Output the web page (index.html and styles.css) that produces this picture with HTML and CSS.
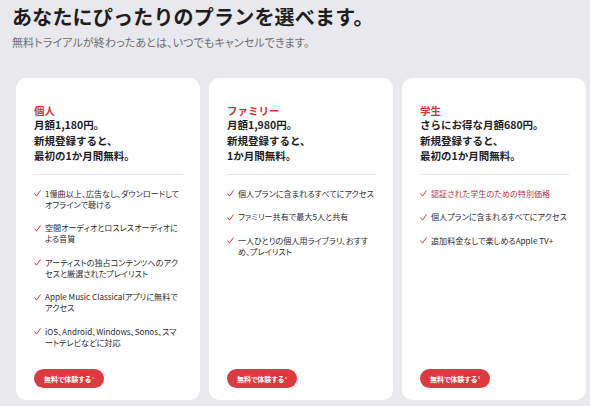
FILE: index.html
```html
<!DOCTYPE html>
<html lang="ja">
<head>
<meta charset="utf-8">
<title>プランを選ぶ</title>
<link rel="stylesheet" href="styles.css">
</head>
<body>
<header class="intro">
  <h1 class="intro-title">あなたにぴったりのプランを選べます。</h1>
  <p class="intro-sub">無料トライアルが終わったあとは、いつでもキャンセルできます。</p>
</header>

<main class="plans">
  <section class="plan">
    <h2 class="plan-name">個人</h2>
    <p class="plan-price">月額1,180円。<br>新規登録すると、<br>最初の1か月間無料。</p>
    <ul class="features">
      <li>1億曲以上、広告なし、ダウンロードしてオフラインで聴ける</li>
      <li>空間オーディオとロスレスオーディオによる音質</li>
      <li>アーティストの独占コンテンツへのアクセスと厳選されたプレイリスト</li>
      <li>Apple Music Classicalアプリに無料でアクセス</li>
      <li>iOS、Android、Windows、Sonos、スマートテレビなどに対応</li>
    </ul>
    <a class="cta" href="#">無料で体験する<sup>¹</sup></a>
  </section>

  <section class="plan">
    <h2 class="plan-name">ファミリー</h2>
    <p class="plan-price">月額1,980円。<br>新規登録すると、<br>1か月間無料。</p>
    <ul class="features">
      <li>個人プランに含まれるすべてにアクセス</li>
      <li>ファミリー共有で最大5人と共有</li>
      <li>一人ひとりの個人用ライブラリ、おすすめ、プレイリスト</li>
    </ul>
    <a class="cta" href="#">無料で体験する<sup>²</sup></a>
  </section>

  <section class="plan">
    <h2 class="plan-name">学生</h2>
    <p class="plan-price">さらにお得な月額680円。<br>新規登録すると、<br>最初の1か月間無料。</p>
    <ul class="features">
      <li class="is-highlight">認証された学生のための特別価格</li>
      <li>個人プランに含まれるすべてにアクセス</li>
      <li>追加料金なしで楽しめるApple TV+</li>
    </ul>
    <a class="cta" href="#">無料で体験する<sup>³</sup></a>
  </section>
</main>
</body>
</html>
```

FILE: styles.css
```css
* {
  box-sizing: border-box;
}

html, body {
  margin: 0;
  padding: 0;
}

body {
  width: 590px;
  height: 406px;
  overflow: hidden;
  background: #e8e8ed;
  color: #1d1d1f;
  font-family: "Noto Sans CJK JP", "Noto Sans", sans-serif;
}

/* heading block */
.intro {
  padding: 3px 12px 0;
}

.intro-title {
  margin: 0;
  font-size: 20px;
  line-height: 28px;
  font-weight: 700;
  letter-spacing: 0.2px;
}

.intro-sub {
  margin: 4px 0 0;
  font-size: 11px;
  line-height: 14px;
  color: #6e6e73;
  font-feature-settings: "palt";
  letter-spacing: 0.1px;
}

/* plan cards */
.plans {
  display: flex;
  gap: 9px;
  padding: 29px 0 0 16px;
}

.plan {
  flex: 0 0 184px;
  height: 322px;
  display: flex;
  flex-direction: column;
  padding: 27px 17px 12px 18px;
  background: #fff;
  border-radius: 10px;
}

.plan-name {
  margin: 0;
  font-size: 10.5px;
  line-height: 12px;
  font-weight: 700;
  color: #d7313b;
}

.plan-price {
  margin: 0;
  font-size: 10.5px;
  line-height: 15.5px;
  font-weight: 700;
  padding-bottom: 10px;
  border-bottom: 1px solid #e6e6eb;
}

.features {
  list-style: none;
  margin: 0;
  padding: 13px 0 0;
  display: flex;
  flex-direction: column;
  gap: 12.5px;
}

.features li {
  display: flex;
  gap: 4px;
  font-size: 8.1px;
  line-height: 11px;
  color: #2c2c2e;
  font-feature-settings: "palt";
}

.features li::before {
  content: "";
  flex: 0 0 7px;
  height: 7px;
  margin-top: 2.5px;
  background: url("data:image/svg+xml;utf8,<svg xmlns='http://www.w3.org/2000/svg' viewBox='0 0 7 7'><path d='M0.7 3.9 L2.5 6.1 L6.3 0.8' fill='none' stroke='%23d7313b' stroke-width='1' stroke-linecap='round' stroke-linejoin='round'/></svg>") no-repeat center / contain;
}

.features li.is-highlight {
  color: #b8344a;
}

.cta {
  margin-top: auto;
  align-self: flex-start;
  display: inline-flex;
  align-items: center;
  height: 19px;
  padding: 0 10px;
  border-radius: 10px;
  background: #dc3a40;
  color: #fff;
  font-size: 7px;
  font-weight: 700;
  text-decoration: none;
  font-feature-settings: "palt";
}

.cta sup {
  font-size: 4.5px;
  line-height: 0;
  margin-left: 1px;
  vertical-align: 3px;
}
```
